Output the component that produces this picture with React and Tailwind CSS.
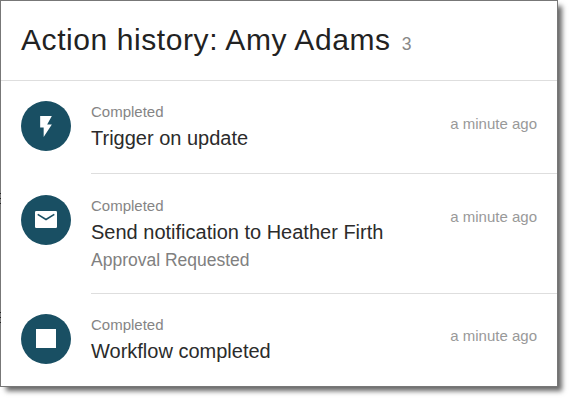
import React from 'react';

const ACTIONS = [
    { id: 1, icon: 'trigger', status: 'Completed', title: 'Trigger on update', time: 'a minute ago', height: 'h-[93px]', iconTop: 'mt-5', textTop: 'pt-[19px]', timeTop: 'mt-[31px]' },
    { id: 2, icon: 'email', status: 'Completed', title: 'Send notification to Heather Firth', note: 'Approval Requested', time: 'a minute ago', height: 'h-[120px]', iconTop: 'mt-[21px]', textTop: 'pt-5', timeTop: 'mt-[31px]' },
    { id: 3, icon: 'stop', status: 'Completed', title: 'Workflow completed', time: 'a minute ago', height: 'h-[92px]', iconTop: 'mt-5', textTop: 'pt-[19px]', timeTop: 'mt-[30px]' }
];

// Dark ticks that sit on the left border of the panel
const EDGE_MARKS = ['top-[192px]', 'top-[197px]', 'top-[202px]', 'top-[311px]', 'top-[316px]', 'top-[321px]'];

const ActionIcon = ({ name }) => {
    if (name === 'stop') {
        return <span className="mb-px h-[19px] w-5 bg-white" />;
    }

    if (name === 'email') {
        return (
            <svg viewBox="0 0 22 17" className="mb-px h-[17px] w-[22px]">
                <rect width="22" height="17" rx="1.2" className="fill-white" />
                <path d="M2.7 3.4L11 8.5l8.3-5.1" fill="none" stroke="#194f63" strokeWidth="1.6" />
            </svg>
        );
    }

    return (
        <svg viewBox="0 0 24 24" className="h-[25px] w-7 fill-white" preserveAspectRatio="none">
            <path d="M7 2v11h3v9l7-12h-4l4-8z" />
        </svg>
    );
};

const ActionRow = ({ action, last }) => (
    <li className={`flex pl-5 ${action.height}`}>
        <div className={`mr-5 flex h-[50px] w-[50px] shrink-0 items-center justify-center rounded-full bg-[#194f63] ${action.iconTop}`}>
            <ActionIcon name={action.icon} />
        </div>
        <div className={`flex flex-1 justify-between pr-5 ${last ? '' : 'border-b border-[#dedede]'}`}>
            <div className={`whitespace-nowrap ${action.textTop}`}>
                <p className="text-[15px] leading-6 text-[#858585]">{action.status}</p>
                <p className="text-[20px] leading-7 text-[#2b2b2b]">{action.title}</p>
                {action.note && <p className="text-[17.5px] leading-7 text-[#808080]">{action.note}</p>}
            </div>
            <span className={`text-[15px] leading-6 whitespace-nowrap text-[#999] ${action.timeTop}`}>{action.time}</span>
        </div>
    </li>
);

export default function App() {
    return (
        <div className="h-[402px] w-[573px] bg-white font-['Liberation_Sans',Arial,sans-serif]">
            <section className="relative h-[387px] w-[558px] border border-[#777] bg-white shadow-[5px_5px_5px_-1px_rgba(0,0,0,0.6)]">
                {EDGE_MARKS.map((top) => (
                    <span key={top} className={`absolute -left-px h-px w-px bg-[#222] ${top}`} />
                ))}
                <header className="flex h-20 items-baseline border-b border-[#dedede] pt-4 pl-5">
                    <h1 className="text-[30px] leading-[46px] tracking-[0.58px] text-[#222]">Action history: Amy Adams</h1>
                    <span className="ml-[11px] text-[17.5px] text-[#888]">3</span>
                </header>
                <ul>
                    {ACTIONS.map((action, index) => (
                        <ActionRow key={action.id} action={action} last={index === ACTIONS.length - 1} />
                    ))}
                </ul>
            </section>
        </div>
    );
}
